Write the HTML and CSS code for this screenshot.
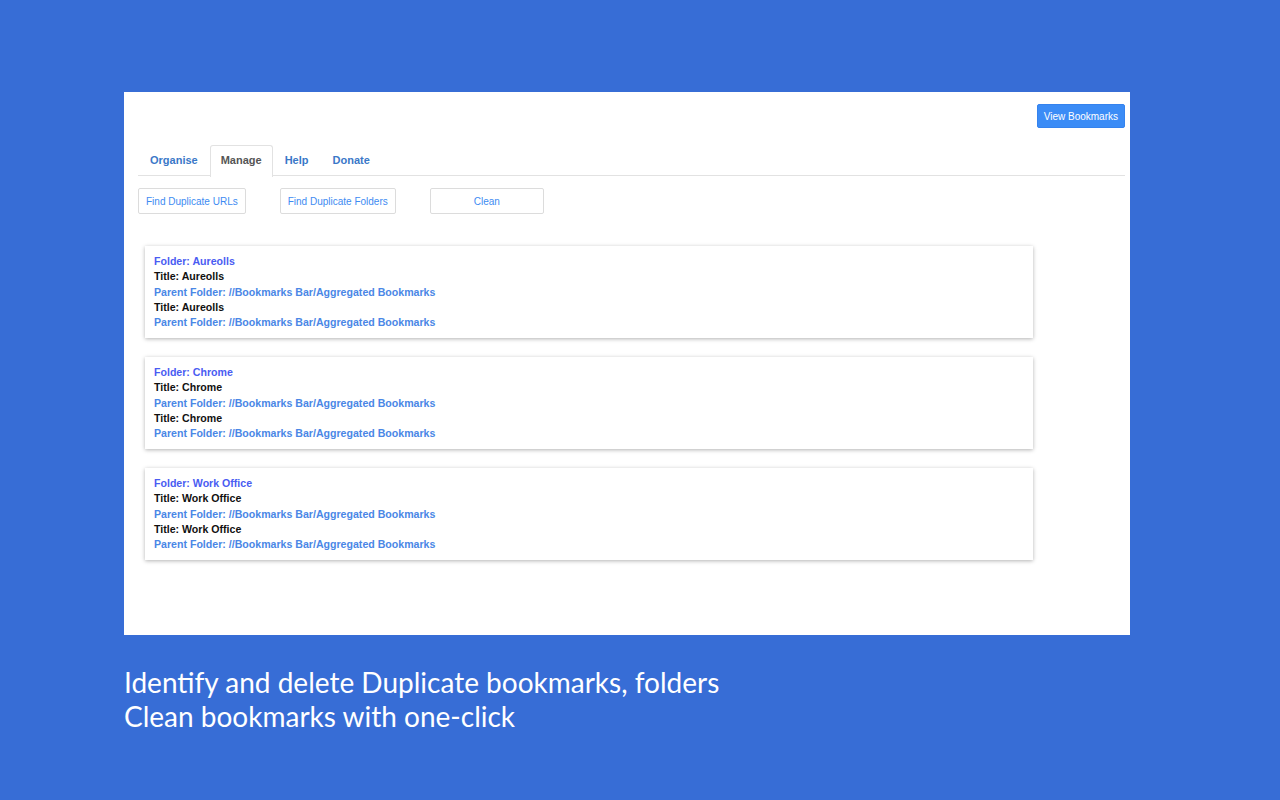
FILE: index.html
```html
<!DOCTYPE html>
<html>
<head>
<meta charset="utf-8">
<link rel="stylesheet" href="styles.css">
</head>
<body>
<div class="panel">
  <div class="topbar">
    <button class="view-btn">View Bookmarks</button>
  </div>
  <ul class="tabs">
    <li class="tab">Organise</li>
    <li class="tab active">Manage</li>
    <li class="tab">Help</li>
    <li class="tab">Donate</li>
  </ul>
  <div class="actions">
    <button class="act">Find Duplicate URLs</button>
    <button class="act">Find Duplicate Folders</button>
    <button class="act clean">Clean</button>
  </div>
  <div class="cards">
    <div class="card">
      <div class="folder">Folder: Aureolls</div>
      <div class="title">Title: Aureolls</div>
      <div class="parent">Parent Folder: //Bookmarks Bar/Aggregated Bookmarks</div>
      <div class="title">Title: Aureolls</div>
      <div class="parent">Parent Folder: //Bookmarks Bar/Aggregated Bookmarks</div>
    </div>
    <div class="card">
      <div class="folder">Folder: Chrome</div>
      <div class="title">Title: Chrome</div>
      <div class="parent">Parent Folder: //Bookmarks Bar/Aggregated Bookmarks</div>
      <div class="title">Title: Chrome</div>
      <div class="parent">Parent Folder: //Bookmarks Bar/Aggregated Bookmarks</div>
    </div>
    <div class="card">
      <div class="folder">Folder: Work Office</div>
      <div class="title">Title: Work Office</div>
      <div class="parent">Parent Folder: //Bookmarks Bar/Aggregated Bookmarks</div>
      <div class="title">Title: Work Office</div>
      <div class="parent">Parent Folder: //Bookmarks Bar/Aggregated Bookmarks</div>
    </div>
  </div>
</div>
<div class="caption">
  <p>Identify and delete Duplicate bookmarks, folders</p>
  <p>Clean bookmarks with one-click</p>
</div>
</body>
</html>
```

FILE: styles.css
```css
html, body {
  margin: 0;
  padding: 0;
}
body {
  background: #376dd6;
  padding: 92px 0 0 124px;
  width: 1280px;
  height: 800px;
  box-sizing: border-box;
  font-family: "Liberation Sans", Arial, sans-serif;
}
.panel {
  width: 1006px;
  height: 543px;
  background: #fff;
  box-sizing: border-box;
  padding: 12px 5px 0 14px;
}
.topbar {
  display: flex;
  justify-content: flex-end;
  height: 24px;
}
.view-btn {
  background: #3b8cf6;
  color: #fff;
  border: 1px solid #3583ee;
  border-radius: 2px;
  font-family: "Liberation Sans", Arial, sans-serif;
  font-size: 10px;
  padding: 0 6px;
  height: 24px;
  white-space: nowrap;
}
.tabs {
  list-style: none;
  margin: 17px 0 0 0;
  padding: 0;
  display: flex;
  border-bottom: 1px solid #e2e2e2;
  height: 30px;
}
.tab {
  font-size: 11px;
  font-weight: bold;
  color: #3a78c8;
  padding: 0 11px;
  line-height: 29px;
  border: 1px solid transparent;
  border-bottom: none;
  border-radius: 3px 3px 0 0;
  margin-bottom: -1px;
  height: 30px;
}
.tab.active {
  color: #555;
  border-color: #e2e2e2;
  background: #fff;
  height: 31px;
  padding: 0 10px;
}
.actions {
  display: flex;
  gap: 34px;
  margin-top: 12px;
}
.act {
  height: 26px;
  background: #fff;
  border: 1px solid #dcdcdc;
  border-radius: 2px;
  color: #3d8bf2;
  font-family: "Liberation Sans", Arial, sans-serif;
  font-size: 10px;
  padding: 0 7px;
}
.act.clean {
  width: 114px;
}
.cards {
  display: flex;
  flex-direction: column;
  gap: 19px;
  margin: 32px 0 0 7px;
  width: 888px;
}
.card {
  background: #fff;
  box-shadow: 0 1px 4px rgba(0, 0, 0, 0.3);
  padding: 8px 9px 8px 9px;
  height: 92px;
  box-sizing: border-box;
  font-size: 10.6px;
  font-weight: bold;
  line-height: 15.3px;
}
.folder {
  color: #4a5cf2;
}
.title {
  color: #111;
}
.parent {
  color: #4a87e6;
}
.caption {
  margin-top: 30px;
  color: #fff;
  font-family: Lato, "Noto Sans", sans-serif;
  font-weight: 400;
  font-size: 28px;
  line-height: 34px;
}
.caption p {
  margin: 0;
}
```
